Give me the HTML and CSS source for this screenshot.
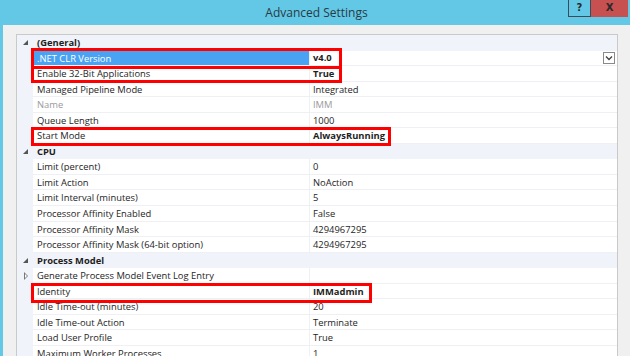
FILE: index.html
```html
<!DOCTYPE html>
<html>
<head>
<meta charset="utf-8">
<link rel="stylesheet" href="styles.css">
</head>
<body>
<div class="window">
  <div class="titlebar">
    <div class="title">Advanced Settings</div>
    <div class="buttons">
      <div class="btn help">?</div>
      <div class="btn close">X</div>
    </div>
  </div>
  <div class="body">
    <div class="grid">
      <div class="row cat"><span class="gut"><span class="tri-open"></span></span><span class="name">(General)</span><span class="val"></span></div>
      <div class="row sel"><span class="gut"></span><span class="name">.NET CLR Version</span><span class="val drop"><b>v4.0</b><span class="ddbtn"><svg width="8" height="6" viewBox="0 0 8 6"><path d="M1 1.5 L4 4.5 L7 1.5" fill="none" stroke="#444" stroke-width="1.4"/></svg></span></span></div>
      <div class="row"><span class="gut"></span><span class="name">Enable 32-Bit Applications</span><span class="val"><b>True</b></span></div>
      <div class="row"><span class="gut"></span><span class="name">Managed Pipeline Mode</span><span class="val">Integrated</span></div>
      <div class="row dis"><span class="gut"></span><span class="name">Name</span><span class="val">IMM</span></div>
      <div class="row"><span class="gut"></span><span class="name">Queue Length</span><span class="val">1000</span></div>
      <div class="row"><span class="gut"></span><span class="name">Start Mode</span><span class="val"><b>AlwaysRunning</b></span></div>
      <div class="row cat"><span class="gut"><span class="tri-open"></span></span><span class="name">CPU</span><span class="val"></span></div>
      <div class="row"><span class="gut"></span><span class="name">Limit (percent)</span><span class="val">0</span></div>
      <div class="row"><span class="gut"></span><span class="name">Limit Action</span><span class="val">NoAction</span></div>
      <div class="row"><span class="gut"></span><span class="name">Limit Interval (minutes)</span><span class="val">5</span></div>
      <div class="row"><span class="gut"></span><span class="name">Processor Affinity Enabled</span><span class="val">False</span></div>
      <div class="row"><span class="gut"></span><span class="name">Processor Affinity Mask</span><span class="val">4294967295</span></div>
      <div class="row"><span class="gut"></span><span class="name">Processor Affinity Mask (64-bit option)</span><span class="val">4294967295</span></div>
      <div class="row cat"><span class="gut"><span class="tri-open"></span></span><span class="name">Process Model</span><span class="val"></span></div>
      <div class="row"><span class="gut"><span class="tri-closed"></span></span><span class="name">Generate Process Model Event Log Entry</span><span class="val"></span></div>
      <div class="row"><span class="gut"></span><span class="name">Identity</span><span class="val"><b>IMMadmin</b></span></div>
      <div class="row"><span class="gut"></span><span class="name">Idle Time-out (minutes)</span><span class="val">20</span></div>
      <div class="row"><span class="gut"></span><span class="name">Idle Time-out Action</span><span class="val">Terminate</span></div>
      <div class="row"><span class="gut"></span><span class="name">Load User Profile</span><span class="val">True</span></div>
      <div class="row"><span class="gut"></span><span class="name">Maximum Worker Processes</span><span class="val">1</span></div>
    </div>
  </div>
  <div class="mark m1"></div>
  <div class="mark m2"></div>
  <div class="mark m3"></div>
  <div class="mark m4"></div>
</div>
</body>
</html>
```
FILE: styles.css
```css
html, body {
  margin: 0;
  padding: 0;
  width: 630px;
  height: 356px;
  overflow: hidden;
  background: #f0f0f0;
}
.window {
  position: relative;
  width: 630px;
  height: 356px;
  box-sizing: border-box;
  border-left: 3px solid #62c8e6;
  background: #f0f0f0;
  font-family: "Open Sans", "Noto Sans", sans-serif;
  color: #1e1e1e;
  overflow: hidden;
}
.titlebar {
  height: 25px;
  background: #62c8e6;
  position: relative;
}
.title {
  text-align: center;
  font-size: 12px;
  line-height: 26px;
  color: #2a3a44;
}
.buttons {
  position: absolute;
  top: 0;
  right: 2px;
  display: flex;
}
.btn {
  height: 17px;
  box-sizing: border-box;
  font-family: "DejaVu Sans", sans-serif;
  font-weight: bold;
  font-size: 10px;
  line-height: 16px;
  text-align: center;
  color: #2a2a2a;
}
.help {
  width: 23px;
  border: 1px solid #3b4c56;
  border-top: none;
}
.close {
  width: 37px;
  background: #c75050;
}
.body {
  padding: 9px 12px 0 13px;
}
.grid {
  border: 1px solid #c9c9c9;
  border-bottom: none;
  background: #f0f3f9;
  height: 330px;
  overflow: hidden;
  font-size: 9.4px;
}
.row {
  display: grid;
  grid-template-columns: 16px 276px 1fr;
  height: 15.55px;
  line-height: 15px;
  box-sizing: border-box;
}
.row .gut {
  position: relative;
}
.row .name, .row .val {
  background: #fff;
  border-bottom: 1px solid #eef0f3;
  white-space: nowrap;
  overflow: hidden;
}
.row .name {
  padding-left: 4px;
}
.row .val {
  border-left: 1px solid #eef0f3;
  padding-left: 3px;
}
.row b {
  font-weight: 700;
}
.row.cat .name, .row.cat .val {
  background: transparent;
  border: none;
  font-weight: 700;
}
.row.sel .name {
  background: #4aa3f2;
  color: #fff;
}
.row.dis {
  color: #9a9a9a;
}
.val.drop {
  display: flex;
  justify-content: space-between;
  align-items: center;
}
.ddbtn {
  width: 12px;
  height: 12px;
  box-sizing: border-box;
  border: 1px solid #8a8a8a;
  background: #fff;
  margin-right: 2px;
  display: flex;
  align-items: center;
  justify-content: center;
}
.tri-open {
  position: absolute;
  left: 6px;
  top: 5px;
  width: 0;
  height: 0;
  border-left: 5px solid transparent;
  border-bottom: 5px solid #555;
}
.tri-closed {
  position: absolute;
  left: 7px;
  top: 4px;
  width: 0;
  height: 0;
  border-top: 4px solid transparent;
  border-bottom: 4px solid transparent;
  border-left: 4px solid #777;
}
.tri-closed::after {
  content: "";
  position: absolute;
  left: -3px;
  top: -2px;
  border-top: 2px solid transparent;
  border-bottom: 2px solid transparent;
  border-left: 2px solid #fff;
}
.mark {
  position: absolute;
  border: 3px solid #ff0000;
  box-sizing: border-box;
}
.m1 { left: 28px; top: 48px; width: 311px; height: 21px; }
.m2 { left: 28px; top: 66px; width: 311px; height: 17px; }
.m3 { left: 28px; top: 127px; width: 360px; height: 19px; }
.m4 { left: 28px; top: 283px; width: 341px; height: 20px; }
```
